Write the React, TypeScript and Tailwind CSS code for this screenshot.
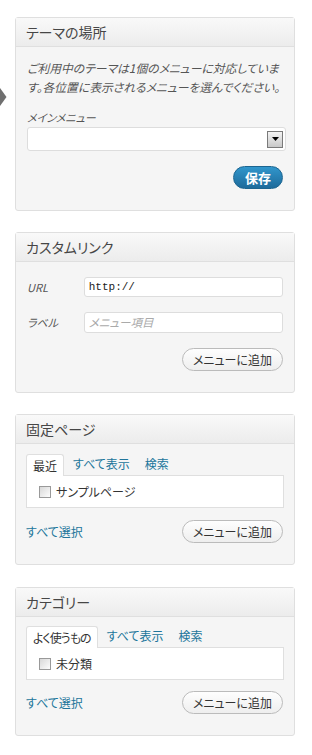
import React from 'react';

const jp = "font-['Noto_Sans_CJK_JP','Noto_Sans',sans-serif] [font-feature-settings:'palt']";

const Panel: React.FC<{ title: string; children: React.ReactNode }> = ({ title, children }) => (
    <div className="w-[280px] rounded-[3px] border border-[#dfdfdf] bg-[#f5f5f5]">
        <div className="flex h-[29px] items-center border-b border-[#dfdfdf] bg-gradient-to-b from-[#f9f9f9] to-[#ececec] px-[10px] text-[14px] text-[#464646]">
            {title}
        </div>
        {children}
    </div>
);

const AddButton: React.FC = () => (
    <button className="flex h-[23px] w-[101px] items-center justify-center rounded-full border border-[#bbbbbb] bg-gradient-to-b from-[#fefefe] to-[#eeeeee] text-[12px] text-[#333]">
        メニューに追加
    </button>
);

const Checkbox: React.FC = () => (
    <span className="inline-block h-[12px] w-[12px] border border-[#999] bg-gradient-to-br from-[#d8d8d8] to-[#fdfdfd]" />
);

const TabBox: React.FC<{ tabs: string[]; item: string; tight?: boolean }> = ({ tabs, item, tight }) => (
    <div>
        <div className="flex h-[22px] items-end text-[12px]">
            {tabs.map((t, i) => (
                <span
                    key={t}
                    className={`mr-[3px] flex h-[22px] items-center px-[6px] ${
                        i === 0
                            ? `relative top-[1px] rounded-t-[3px] border border-b-0 border-[#dfdfdf] bg-white px-[5px] text-[#333] ${tight ? 'tracking-[-1px]' : ''}`
                            : 'text-[#21759b]'
                    }`}
                >
                    {t}
                </span>
            ))}
        </div>
        <div className="flex h-[33px] items-center gap-[5px] border border-[#dfdfdf] bg-white pl-[12px] text-[12px] text-[#333]">
            <Checkbox />
            {item}
        </div>
    </div>
);

const App: React.FC = () => {
    return (
        <div className={`relative min-h-[755px] w-[312px] bg-white ${jp}`}>
            {/* arrow from the column on the left */}
            <svg className="absolute left-0 top-[88px]" width="7" height="18" viewBox="0 0 7 18">
                <polygon points="0,0 6.5,9 0,18" fill="#6f6f6f" />
            </svg>

            <div className="flex flex-col gap-[21px] pl-[15px] pt-[17px]">
                <Panel title="テーマの場所">
                    <div className="flex flex-col px-[11px] pb-[21px] pt-[11px]">
                        <p className="whitespace-nowrap text-[11.8px] italic leading-[19px] text-[#555]">
                            ご利用中のテーマは1個のメニューに対応していま
                            <br />
                            す。各位置に表示されるメニューを選んでください。
                        </p>
                        <span className="mt-[13px] text-[11px] italic leading-[16px] text-[#555]">メインメニュー</span>
                        <div className="mt-[2px] flex h-[24px] w-[259px] items-center justify-end rounded-[3px] border border-[#dddddd] bg-white pr-[2px]">
                            <span className="flex h-[17px] w-[16px] items-center justify-center border border-[#7a7a7a] bg-gradient-to-b from-[#f4f4f4] to-[#c8c8c8]">
                                <svg width="7" height="4" viewBox="0 0 7 4">
                                    <polygon points="0,0 7,0 3.5,4" fill="#000" />
                                </svg>
                            </span>
                        </div>
                        <div className="mt-[15px] flex justify-end">
                            <button className="flex h-[23px] w-[50px] items-center justify-center rounded-full border border-[#1c6590] bg-gradient-to-b from-[#3196cc] to-[#1e6b9b] text-[13px] font-bold text-white">
                                保存
                            </button>
                        </div>
                    </div>
                </Panel>

                <Panel title="カスタムリンク">
                    <div className="flex flex-col px-[11px] pb-[21px] pt-[15px]">
                        <div className="flex items-center">
                            <span className="w-[57px] text-[11px] italic text-[#555]">URL</span>
                            <div className="flex h-[20px] w-[200px] items-center rounded-[3px] border border-[#dddddd] bg-white px-[4px] font-['Liberation_Mono',monospace] text-[11px] text-[#222]">
                                http://
                            </div>
                        </div>
                        <div className="mt-[15px] flex items-center">
                            <span className="w-[57px] text-[11px] italic text-[#555]">ラベル</span>
                            <div className="flex h-[21px] w-[200px] items-center rounded-[3px] border border-[#dddddd] bg-white px-[4px] text-[11.5px] italic text-[#aaa]">
                                メニュー項目
                            </div>
                        </div>
                        <div className="mt-[15px] flex justify-end">
                            <AddButton />
                        </div>
                    </div>
                </Panel>

                <Panel title="固定ページ">
                    <div className="flex flex-col px-[10px] pb-[21px] pt-[9px]">
                        <TabBox tabs={['最近', 'すべて表示', '検索']} item="サンプルページ" />
                        <div className="mt-[12px] flex items-center justify-between pr-[1px]">
                            <span className="text-[12px] text-[#21759b]">すべて選択</span>
                            <AddButton />
                        </div>
                    </div>
                </Panel>

                <div className="mt-[1px]">
                    <Panel title="カテゴリー">
                        <div className="flex flex-col px-[10px] pb-[21px] pt-[8px]">
                            <TabBox tabs={['よく使うもの', 'すべて表示', '検索']} item="未分類" tight />
                            <div className="mt-[11px] flex items-center justify-between pr-[1px]">
                                <span className="text-[12px] text-[#21759b]">すべて選択</span>
                                <AddButton />
                            </div>
                        </div>
                    </Panel>
                </div>
            </div>
        </div>
    );
};

export default App;
